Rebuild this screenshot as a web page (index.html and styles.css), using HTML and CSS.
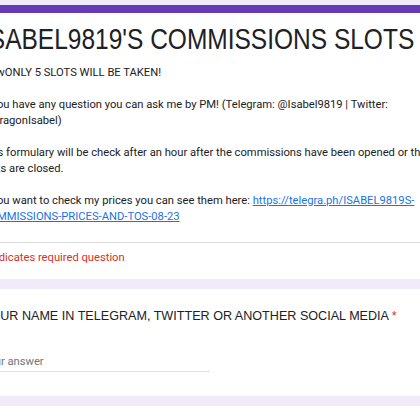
FILE: index.html
```html
<!DOCTYPE html>
<html>
<head>
<meta charset="utf-8">
<link rel="stylesheet" href="styles.css">
</head>
<body>
<div class="page">
  <div class="card header">
    <div class="accent"></div>
    <div class="head-body">
      <h1 class="title">ISABEL9819'S COMMISSIONS SLOTS</h1>
      <div class="desc">
        <p>NowONLY 5 SLOTS WILL BE TAKEN!</p>
        <p>If you have any question you can ask me by PM! (Telegram: @Isabel9819 | Twitter: @DragonIsabel)</p>
        <p>This formulary will be check after an hour after the commissions have been opened or the slots are closed.</p>
        <p>If you want to check my prices you can see them here: <a href="#">https://telegra.ph/ISABEL9819S-COMMISSIONS-PRICES-AND-TOS-08-23</a></p>
      </div>
    </div>
    <div class="required">* Indicates required question</div>
  </div>
  <div class="card question">
    <div class="q-title">YOUR NAME IN TELEGRAM, TWITTER OR ANOTHER SOCIAL MEDIA <span class="star">*</span></div>
    <div class="answer">Your answer</div>
  </div>
  <div class="card question"></div>
</div>
</body>
</html>
```
FILE: styles.css
```css
html, body {
  margin: 0;
  padding: 0;
}
body {
  background: #efebf8;
  overflow: hidden;
  width: 420px;
  height: 420px;
}
.page {
  margin-left: -42px;
  width: 498px;
  padding-top: 5px;
  display: flex;
  flex-direction: column;
  gap: 10px;
}
.card {
  background: #fff;
}
.accent {
  height: 8px;
  background: #673ab7;
}
.head-body {
  padding: 8px 24px 16px 24px;
  border-bottom: 1px solid #dadce0;
}
.title {
  margin: 0;
  font-family: "Liberation Sans", Arial, sans-serif;
  font-weight: 400;
  font-size: 24.5px;
  line-height: 30px;
  white-space: nowrap;
  color: #202124;
  transform: scaleY(1.22);
  transform-origin: 0 0;
}
.desc {
  margin-top: 14px;
  font-family: Roboto, "Liberation Sans", sans-serif;
  font-size: 11.2px;
  line-height: 16.5px;
  color: #202124;
}
.desc p {
  margin: 0 0 15px 0;
}
.desc p:last-child {
  margin-bottom: 0;
}
.desc a {
  color: #1a73e8;
  text-decoration: underline;
}
.required {
  padding: 7px 24px 13px;
  font-family: Roboto, "Liberation Sans", sans-serif;
  font-size: 11.2px;
  line-height: 16px;
  color: #d93025;
}
.question {
  padding: 18px 24px 24px;
}
.q-title {
  font-family: "Liberation Sans", Arial, sans-serif;
  font-size: 12.6px;
  line-height: 18px;
  color: #202124;
}
.star {
  color: #d93025;
}
.answer {
  margin-top: 29px;
  width: 228px;
  padding-bottom: 1px;
  border-bottom: 1px solid #e0e0e0;
  font-family: Roboto, "Liberation Sans", sans-serif;
  font-size: 11.2px;
  line-height: 16px;
  color: #70757a;
}
```
